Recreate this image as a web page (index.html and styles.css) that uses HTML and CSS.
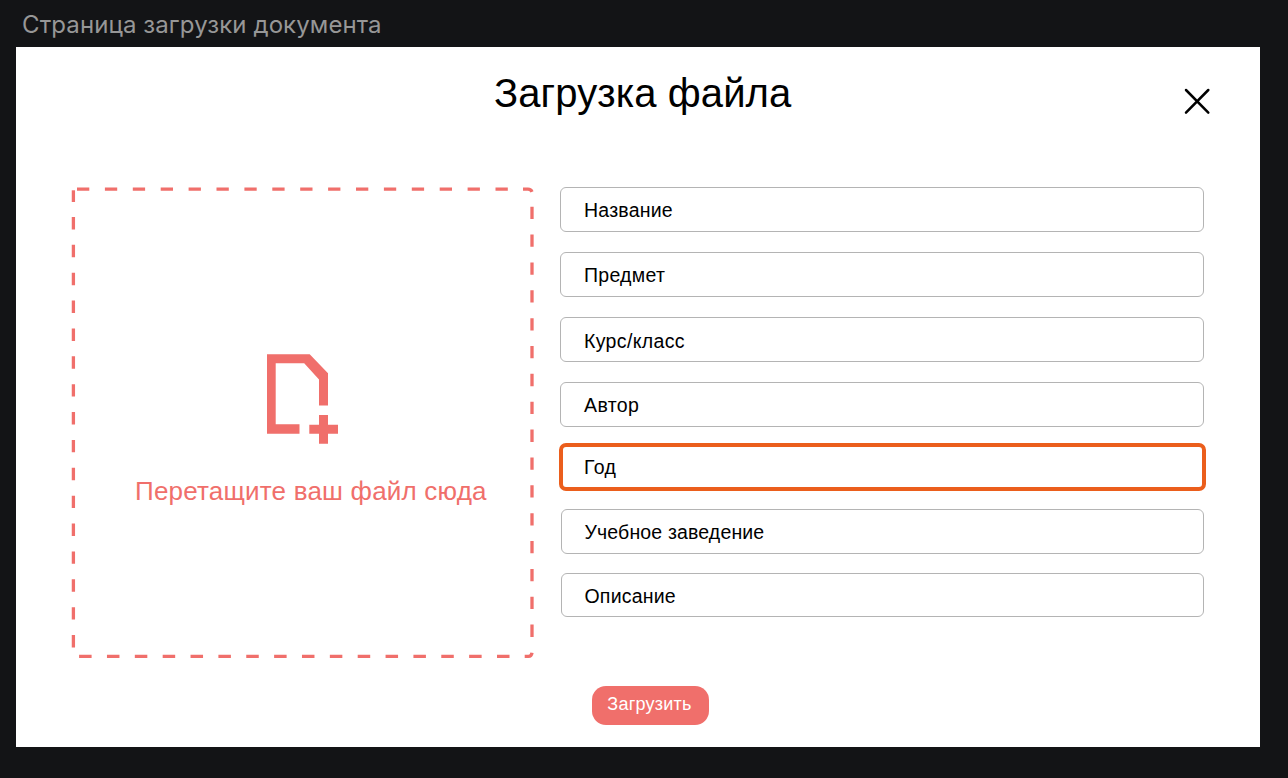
FILE: index.html
```html
<!DOCTYPE html>
<html lang="ru">
<head>
<meta charset="utf-8">
<title>Загрузка файла</title>
<link rel="stylesheet" href="styles.css">
</head>
<body>
<div class="caption"><span>Страница загрузки документа</span></div>
<main class="page">
  <header class="header">
    <h1 class="title">Загрузка файла</h1>
    <svg class="close" width="28" height="28" viewBox="0 0 28 28"><path d="M3 3L25.3 25.7M25.3 3L3 25.7" stroke="#000" stroke-width="2.5" stroke-linecap="round"/></svg>
  </header>
  <div class="content">
    <section class="dropzone">
      <svg class="outline" width="464" height="473" viewBox="0 0 464 473">
        <g fill="none" stroke="#f06f6b" stroke-width="3.3">
          <path d="M7 4.2H446" stroke-dasharray="12.3 15.6"/>
          <path d="M453 4.2H458Q461 4.2 462 6.8"/>
          <path d="M462 21.7V455" stroke-dasharray="12.3 15.56"/>
          <path d="M454.7 471.3H458.5Q461.5 471.3 462 467.7"/>
          <path d="M9.1 471.3H446" stroke-dasharray="12.5 15.36"/>
          <path d="M3.4 5.3V17"/>
          <path d="M3.4 32V465" stroke-dasharray="12.4 15.47"/>
        </g>
      </svg>
      <svg class="file-icon" width="72" height="92" viewBox="0 0 72 92"><path fill="#f06f6b" d="M0 .3H42.7L61 19.3V51.5H52V25.5L37.2 9.3H8.7V70.3H32.5V79.7H0ZM52 61H61V70.7H71V79.7H61V89.7H52V79.7H42.3V70.7H52Z"/></svg>
      <p class="hint">Перетащите ваш файл сюда</p>
    </section>
    <form class="fields">
      <div class="field name">Название</div>
      <div class="field subject">Предмет</div>
      <div class="field course">Курс/класс</div>
      <div class="field author">Автор</div>
      <div class="field active">Год</div>
      <div class="field school">Учебное заведение</div>
      <div class="field about">Описание</div>
    </form>
  </div>
  <div class="actions"><button class="submit" type="button">Загрузить</button></div>
</main>
</body>
</html>
```
FILE: styles.css
```css
* { box-sizing: border-box; }
body {
  margin: 0;
  height: 778px;
  overflow: hidden;
  background: #131416;
  font-family: "Liberation Sans", Arial, sans-serif;
}
.caption {
  height: 47px;
  padding: 10px 0 0 22px;
  font: 24px/30px Inter, sans-serif;
  letter-spacing: 0.1px;
  color: #979797;
}
.page {
  width: 1244px;
  height: 700px;
  margin-left: 16px;
  background: #fff;
  display: flex;
  flex-direction: column;
}
.header {
  height: 138px;
  display: grid;
  grid-template-columns: 477px 300px 1fr;
  padding-right: 49px;
}
.title {
  grid-column: 2;
  margin: 23px 0 0 1px;
  font-size: 40px;
  line-height: 46px;
  font-weight: 400;
  letter-spacing: 0.1px;
  white-space: nowrap;
}
.close { justify-self: end; margin-top: 40px; }
.content { display: flex; padding-left: 54px; height: 474px; }
.dropzone {
  width: 464px;
  height: 473px;
  display: grid;
  grid-template: 169px 100px 1fr / 1fr;
}
.outline { grid-area: 1 / 1 / 4 / 2; }
.file-icon { grid-area: 2 / 1; margin-left: 197px; }
.hint {
  grid-area: 3 / 1;
  margin: 22px 0 0 65px;
  font-size: 26px;
  line-height: 30px;
  letter-spacing: 0.2px;
  color: #f06f6b;
  white-space: nowrap;
}
.fields { margin-left: 26px; padding-top: 2px; width: 646px; }
.field {
  width: 644px;
  height: 45px;
  margin-bottom: 20px;
  padding-left: 23px;
  border: 1px solid #b4b4b4;
  border-radius: 6px;
  font-size: 19.5px;
  line-height: 45px;
  color: #000;
}
.name { letter-spacing: 0.22px; }
.subject { letter-spacing: 0.28px; }
.course { letter-spacing: 0.35px; line-height: 47px; }
.author { letter-spacing: 0.4px; }
.active {
  width: 647px;
  height: 48px;
  margin: -4px 0 18px -1px;
  padding-left: 21px;
  border: 4px solid #eb5e1c;
  border-radius: 7px;
  line-height: 40px;
  letter-spacing: 0.4px;
}
.school, .about { width: 643px; margin-left: 1px; padding-left: 22.5px; }
.school { margin-bottom: 19px; letter-spacing: 0.15px; }
.about { height: 44px; letter-spacing: 0.2px; }
.actions { padding: 27px 0 0 576px; }
.submit {
  display: block;
  width: 117px;
  height: 39px;
  padding: 0 2px 2px 0;
  border: 0;
  border-radius: 14px;
  background: #f06f6b;
  color: #fff;
  font: 18px/37px "Liberation Sans", Arial, sans-serif;
  letter-spacing: 0.25px;
}
```
